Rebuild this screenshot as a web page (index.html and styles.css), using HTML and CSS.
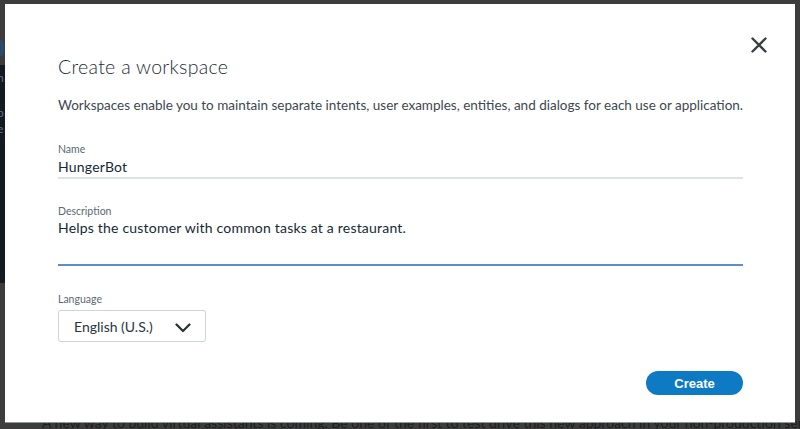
FILE: index.html
```html
<!DOCTYPE html>
<html>
<head>
<meta charset="utf-8">
<link rel="stylesheet" href="styles.css">
</head>
<body>
<div class="page">
  <div class="bg-side">
    <div class="bg-top"><span class="bg-dot"></span></div>
    <div class="bg-nav"><span class="l1">n</span><span class="l2">p</span><span class="l3">e</span></div>
  </div>
  <p class="bg-text">A new way to build virtual assistants is coming. Be one of the first to test drive this new approach in your non-production service instance.</p>
  <div class="modal">
    <button class="close" aria-label="Close">
      <svg width="16" height="16" viewBox="0 0 16 16"><path d="M1.5 1.5 L14.5 14.5 M14.5 1.5 L1.5 14.5" stroke="#3a3f44" stroke-width="2.4" stroke-linecap="round"/></svg>
    </button>
    <h1 class="title">Create a workspace</h1>
    <p class="intro">Workspaces enable you to maintain separate intents, user examples, entities, and dialogs for each use or application.</p>
    <div class="field name">
      <div class="label">Name</div>
      <div class="value">HungerBot</div>
    </div>
    <div class="field desc">
      <div class="label">Description</div>
      <div class="value">Helps the customer with common tasks at a restaurant.</div>
    </div>
    <div class="field lang">
      <div class="label">Language</div>
      <div class="select"><span>English (U.S.)</span>
        <svg width="16" height="10" viewBox="0 0 16 10"><path d="M1.5 1.5 L8 8 L14.5 1.5" fill="none" stroke="#2b2f33" stroke-width="2.2" stroke-linecap="round" stroke-linejoin="round"/></svg>
      </div>
    </div>
    <div class="actions"><button class="create">Create</button></div>
  </div>
</div>
</body>
</html>
```
FILE: styles.css
```css
html, body { margin: 0; padding: 0; }
body { width: 800px; height: 429px; overflow: hidden; background: #3c3c3c; font-family: "Lato", "Noto Sans", sans-serif; }
.page { position: relative; width: 800px; height: 429px; overflow: hidden; }
.bg-side { position: absolute; left: 0; top: 0; width: 5px; height: 429px; }
.bg-top { height: 65px; position: relative; }
.bg-dot { position: absolute; left: 0; top: 40px; width: 4px; height: 16px; background: #2c4a6e; border-radius: 0 8px 8px 0; }
.bg-nav { height: 218px; background: #141a21; position: relative; color: #6a7078; font-size: 12px; }
.bg-nav span { position: absolute; left: -3px; }
.l1 { top: 5px; } .l2 { top: 40px; } .l3 { top: 56px; }
.bg-text { position: absolute; left: 42px; top: 414px; margin: 0; white-space: nowrap; font-size: 14px; color: #1e1e1e; }
.modal { position: absolute; left: 5px; top: 4px; width: 790px; height: 418px; background: #fff; box-sizing: border-box; padding: 0 52px 0 53px; box-shadow: 0 1px 0 #8e9a9a; }
.close { position: absolute; right: 28px; top: 33px; padding: 0; border: 0; background: none; width: 16px; height: 16px; }
.close svg { display: block; }
.title { margin: 0; padding-top: 51px; font-weight: 300; font-size: 19.5px; line-height: 24px; color: #1d2b36; letter-spacing: 0.3px; }
.intro { margin: 17px 0 0; font-size: 13.5px; line-height: 18px; color: #3d4750; white-space: nowrap; }
.field { position: relative; }
.label { font-size: 10.5px; line-height: 13px; color: #5a6872; }
.value { font-size: 14px; line-height: 18px; color: #152935; letter-spacing: 0.2px; }
.name { margin-top: 29px; }
.name .value { margin-top: 2px; padding-bottom: 1px; border-bottom: 2px solid #dfe3e6; }
.desc { margin-top: 26px; }
.desc .value { margin-top: 1px; height: 45px; border-bottom: 2px solid #5b8dcf; }
.lang { margin-top: 27px; }
.select { margin-top: 4px; width: 148px; height: 32px; box-sizing: border-box; border: 1px solid #cfd3d6; border-radius: 3px; display: flex; align-items: center; justify-content: space-between; padding: 0 14px 0 15px; font-size: 14px; color: #2a3540; }
.select svg { display: block; margin-top: 4px; }
.actions { display: flex; justify-content: flex-end; margin-top: 29px; }
.create { width: 97px; height: 24px; border: 0; border-radius: 12px; background: #0f7ac4; color: #fff; font-family: "Liberation Sans", Arial, sans-serif; font-weight: bold; font-size: 13px; padding: 0; }
```
